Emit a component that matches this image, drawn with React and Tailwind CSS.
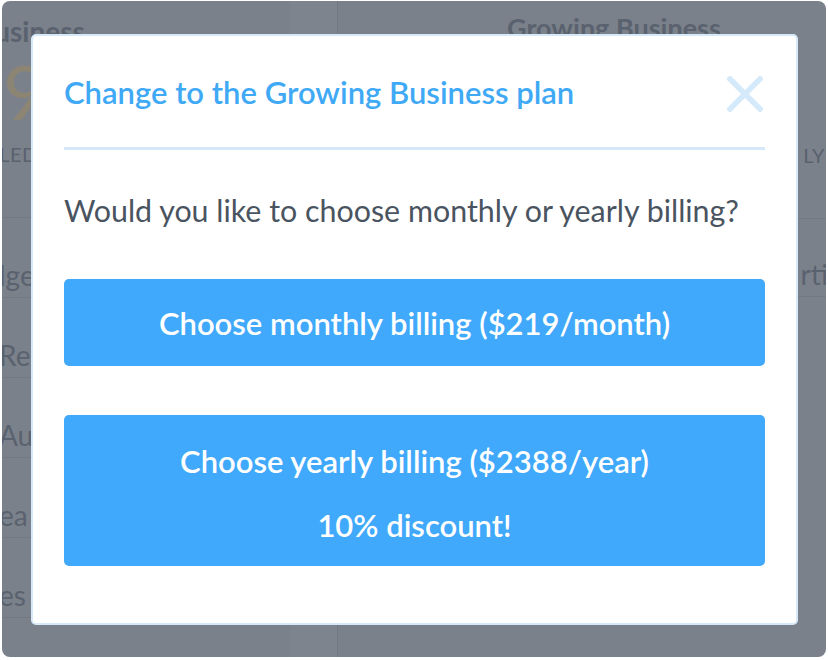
import React from 'react';

const leftRows = ['lge', 'Re', 'Au', 'ea', 'es'];

function PricingBackdrop() {
  return (
    <div className="flex h-full text-[#59626e]">
      {/* left plan column, mostly hidden behind the dialog */}
      <div className="w-[288px] shrink-0 overflow-hidden">
        <div className="ml-[-26px] pt-[13px] text-[28px] font-bold leading-[34px] whitespace-nowrap">Business</div>
        <div className="ml-[1px] mt-[8px] text-[76px] font-normal leading-[70px] text-[#8d8574]">9</div>
        <div className="ml-[-33px] mt-[15px] text-[20px] leading-[26px] tracking-wide whitespace-nowrap">BILLED</div>
        <div className="mt-[50px] border-t border-[#737983]">
          {leftRows.map((f) => (
            <div key={f} className="h-[80px] border-b border-[#737983] flex items-end pb-[8px] text-[28px] leading-none whitespace-nowrap ml-[-3px]">
              {f}
            </div>
          ))}
        </div>
      </div>
      <div className="w-[48px] shrink-0 bg-[#7e848e] border-r border-[#737983]" />
      {/* right plan column */}
      <div className="flex-1 overflow-hidden">
        <div className="pl-[169px] pt-[10px] text-[27px] font-bold leading-[34px] whitespace-nowrap">Growing Business</div>
        <div className="mt-[97px] flex justify-end">
          <span className="mr-[1px] text-[20px] leading-[26px] tracking-wide">LY</span>
        </div>
        <div className="mt-[50px] border-t border-[#737983]">
          <div className="h-[78px] border-b border-[#737983] flex items-end pb-[8px] justify-end text-[28px] leading-none">
            <span className="mr-[-2px]">rti</span>
          </div>
        </div>
      </div>
    </div>
  );
}

export default function App() {
  return (
    <div
      className="w-[828px] h-[660px] bg-white pt-[1px] px-[2px]"
      style={{ fontFamily: 'Lato, "Noto Sans", sans-serif' }}
    >
      <div className="relative h-[656px] rounded-[8px] bg-[#7b818b] overflow-hidden">
        <PricingBackdrop />

        {/* dialog */}
        <div className="absolute left-[29px] top-[33px] w-[767px] h-[591px] bg-white border-2 border-[#d5e9f9] rounded-[5px] px-[31px]">
          <div className="h-[114px] flex items-center justify-between border-b-[3px] border-[#d5e9fa]">
            <h1 className="text-[31px] font-semibold text-[#3fa9f5] leading-[36px]">
              Change to the Growing Business plan
            </h1>
            <button className="mr-[2px] mt-[4px] w-[36px] h-[36px] flex items-center justify-center">
              <svg width="36" height="36" viewBox="0 0 36 36">
                <path d="M3 3 L33 33 M33 3 L3 33" stroke="#d4e9fa" strokeWidth="5.5" strokeLinecap="square" />
              </svg>
            </button>
          </div>

          <p className="mt-[40px] text-[30.4px] leading-[40px] text-[#4a5461]">
            Would you like to choose monthly or yearly billing?
          </p>

          <button className="mt-[49px] w-full h-[87px] rounded-[5px] bg-[#40a9fb] text-white text-[31px] font-semibold leading-[32px] flex items-center justify-center">
            Choose monthly billing ($219/month)
          </button>

          <button className="mt-[49px] w-full h-[151px] rounded-[5px] bg-[#40a9fb] text-white text-[31px] font-semibold leading-[32px] flex flex-col items-center justify-center gap-[32px] pt-[4px]">
            <span>Choose yearly billing ($2388/year)</span>
            <span>10% discount!</span>
          </button>
        </div>
      </div>
    </div>
  );
}
